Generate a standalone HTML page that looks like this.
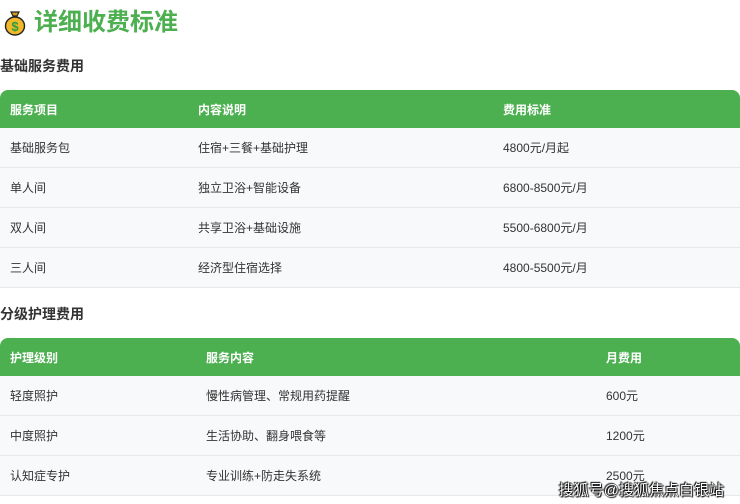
<!DOCTYPE html>
<html><head><meta charset="utf-8"><style>
*{margin:0;padding:0;box-sizing:border-box}
body{width:740px;height:504px;overflow:hidden;background:#fff;font-family:"Liberation Sans","Noto Sans CJK SC",sans-serif;color:#333;position:relative}
h1{position:absolute;left:4px;top:7px;font-size:24px;color:#4caf50;font-weight:bold;display:flex;align-items:center;gap:8px;line-height:32px}
h2{position:absolute;left:0;font-size:14px;font-weight:bold;color:#333}
table{position:absolute;left:0;width:740px;border-collapse:separate;border-spacing:0;font-size:12px}
th{background:#4caf50;color:#fff;text-align:left;height:38px;font-weight:bold;padding-left:10px}
th:first-child{border-top-left-radius:8px}
th:last-child{border-top-right-radius:8px}
td{height:40px;padding-left:10px;background:#f8f9fa;border-bottom:1px solid #e6e8ea}
.wm{position:absolute;right:16px;top:479px;font-size:15px;color:#fff;text-shadow:0 0 1px #000,0 0 1px #000,1px 1px 1px #000,-1px -1px 1px #000}
</style></head><body>
<h1><svg width="22" height="26" viewBox="0 0 22 26"><path d="M7 2h8l-2 4h-4z" fill="#d89a1a" stroke="#222" stroke-width="1.2"/><ellipse cx="11" cy="16" rx="9.5" ry="9" fill="#f2b82b" stroke="#222" stroke-width="1.4"/><text x="11" y="21" font-size="13" text-anchor="middle" fill="#2a9d3a" font-weight="bold" font-family="Liberation Sans">$</text></svg>详细收费标准</h1>
<h2 style="top:56px">基础服务费用</h2>
<table style="top:90px"><tr><th style="width:188px">服务项目</th><th style="width:305px">内容说明</th><th>费用标准</th></tr>
<tr><td>基础服务包</td><td>住宿+三餐+基础护理</td><td>4800元/月起</td></tr>
<tr><td>单人间</td><td>独立卫浴+智能设备</td><td>6800-8500元/月</td></tr>
<tr><td>双人间</td><td>共享卫浴+基础设施</td><td>5500-6800元/月</td></tr>
<tr><td>三人间</td><td>经济型住宿选择</td><td>4800-5500元/月</td></tr></table>
<h2 style="top:304px">分级护理费用</h2>
<table style="top:338px"><tr><th style="width:196px">护理级别</th><th style="width:400px">服务内容</th><th>月费用</th></tr>
<tr><td>轻度照护</td><td>慢性病管理、常规用药提醒</td><td>600元</td></tr>
<tr><td>中度照护</td><td>生活协助、翻身喂食等</td><td>1200元</td></tr>
<tr><td>认知症专护</td><td>专业训练+防走失系统</td><td>2500元</td></tr></table>
<div class="wm">搜狐号@搜狐焦点白银站</div>
</body></html>
